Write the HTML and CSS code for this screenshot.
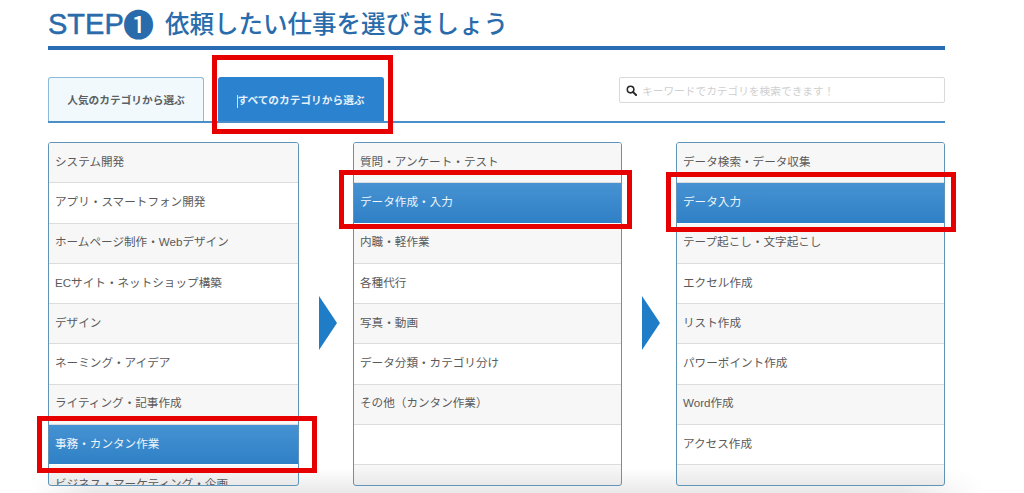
FILE: index.html
```html
<!DOCTYPE html>
<html lang="ja">
<head>
<meta charset="utf-8">
<title>STEP1</title>
<link rel="stylesheet" href="styles.css">
</head>
<body>
<main class="page">
  <h1 class="title"><span class="step">STEP</span><span class="num">❶</span><span class="title-text">依頼したい仕事を選びましょう</span></h1>
  <div class="tabbar">
    <a class="tab">人気のカテゴリから選ぶ</a>
    <a class="tab tab-active"><span class="caret"></span>すべてのカテゴリから選ぶ</a>
    <div class="search">
      <svg class="search-icon" viewBox="0 0 12 12" width="11" height="11"><circle cx="5" cy="5" r="3.6" fill="none" stroke="#2a2a2a" stroke-width="1.7"/><path d="M7.8 7.8L11 11" stroke="#2a2a2a" stroke-width="2.2" stroke-linecap="round"/></svg>
      <span class="placeholder">キーワードでカテゴリを検索できます！</span>
    </div>
  </div>
  <div class="columns">
    <ul class="list list-narrow">
      <li>システム開発</li>
      <li>アプリ・スマートフォン開発</li>
      <li>ホームページ制作・Webデザイン</li>
      <li>ECサイト・ネットショップ構築</li>
      <li>デザイン</li>
      <li>ネーミング・アイデア</li>
      <li>ライティング・記事作成</li>
      <li class="selected">事務・カンタン作業</li>
      <li class="clipped">ビジネス・マーケティング・企画</li>
    </ul>
    <div class="arrow"></div>
    <ul class="list">
      <li>質問・アンケート・テスト</li>
      <li class="selected">データ作成・入力</li>
      <li>内職・軽作業</li>
      <li>各種代行</li>
      <li>写真・動画</li>
      <li>データ分類・カテゴリ分け</li>
      <li>その他（カンタン作業）</li>
      <li class="empty"></li>
    </ul>
    <div class="arrow"></div>
    <ul class="list">
      <li>データ検索・データ収集</li>
      <li class="selected">データ入力</li>
      <li>テープ起こし・文字起こし</li>
      <li>エクセル作成</li>
      <li>リスト作成</li>
      <li>パワーポイント作成</li>
      <li>Word作成</li>
      <li>アクセス作成</li>
    </ul>
  </div>
  <div class="mark mark-tab"></div>
  <div class="mark mark-col1"></div>
  <div class="mark mark-col2"></div>
  <div class="mark mark-col3"></div>
  <div class="fade"></div>
</main>
</body>
</html>
```
FILE: styles.css
```css
* { box-sizing: border-box; }
html, body { margin: 0; padding: 0; background: #fff; }
body {
  font-family: "Liberation Sans", "Noto Sans CJK JP", sans-serif;
  color: #555;
  height: 493px;
  overflow: hidden;
}
.page {
  position: relative;
  width: 1024px;
  height: 493px;
  padding: 0 79px 0 48px;
  overflow: hidden;
}
.title {
  display: flex;
  align-items: center;
  margin: 0;
  height: 50px;
  padding-bottom: 1px;
  border-bottom: 4px solid #2a6cb3;
  font-family: "Noto Sans CJK JP", sans-serif;
  font-weight: 500;
  color: #2a6cab;
  white-space: nowrap;
}
.step {
  width: 75px;
  margin-top: 3px;
  font-family: "Liberation Sans", sans-serif;
  font-size: 29px;
  font-weight: 400;
  line-height: 32px;
  -webkit-text-stroke: 0.5px #2a6cab;
}
.num { width: 42px; font-size: 31px; line-height: 32px; }
.title-text { font-size: 24.5px; line-height: 32px; }
.tabbar {
  display: flex;
  align-items: flex-start;
  gap: 14px;
  margin-top: 27px;
  height: 46px;
  border-bottom: 2px solid #4a8fc7;
}
.tab {
  display: flex;
  align-items: center;
  justify-content: center;
  width: 156px;
  height: 44px;
  border: 1px solid #8dbad6;
  border-bottom: 0;
  border-radius: 3px 3px 0 0;
  background: #f2f9fd;
  font-size: 10.7px;
  font-weight: 700;
  color: #5a5f63;
}
.tab-active {
  position: relative;
  width: 166px;
  background: #2b82cf;
  border-color: #2b82cf;
  color: #e6f0f8;
}
.caret {
  position: absolute;
  left: 18px;
  top: 17px;
  width: 1px;
  height: 13px;
  background: #cfe2f2;
}
.search {
  display: flex;
  align-items: center;
  gap: 5px;
  margin-left: auto;
  width: 326px;
  height: 26px;
  padding-left: 6px;
  border: 1px solid #d9d9d9;
  border-radius: 2px;
  background: #fff;
}
.search-icon { flex: none; }
.placeholder { font-size: 10.7px; color: #cfcfcf; white-space: nowrap; }
.columns {
  position: relative;
  z-index: 1;
  display: flex;
  margin-top: 19px;
  height: 344px;
}
.list {
  flex: 0 0 269px;
  height: 344px;
  margin: 0;
  padding: 0;
  list-style: none;
  overflow: hidden;
  border: 1px solid #5f93b8;
  border-radius: 3px;
  background: linear-gradient(#f7f7f7 calc(100% - 18px), #e9e9e9);
}
.list-narrow { flex-basis: 251px; }
.list li {
  display: flex;
  align-items: center;
  height: 40.3px;
  padding: 0 0 4px 6px;
  border-bottom: 1px solid #dcdcdc;
  font-size: 11.6px;
  white-space: nowrap;
  color: #5a5a5a;
}
.list li:nth-child(odd) { background: #f7f7f7; }
.list li:nth-child(even) { background: #fff; }
.list li.selected {
  background: linear-gradient(#4692d2, #2f80c6);
  color: #eef5fb;
  border-bottom-color: #fff;
}
.list li.empty { background: #fff; }
.list li.clipped { background: transparent; }
.arrow {
  flex: 0 0 54px;
  display: flex;
  align-items: center;
  justify-content: center;
}
.arrow::before {
  content: "";
  margin: 18px 0 0 3px;
  border-left: 18px solid #1f7cc6;
  border-top: 27px solid transparent;
  border-bottom: 27px solid transparent;
}
.mark {
  position: absolute;
  z-index: 2;
  border: 5px solid #e60000;
  pointer-events: none;
}
.mark-tab { left: 212px; top: 55px; width: 181px; height: 79px; }
.mark-col1 { left: 37px; top: 416px; width: 280px; height: 57px; }
.mark-col2 { left: 339px; top: 170px; width: 293px; height: 59px; }
.mark-col3 { left: 666px; top: 172px; width: 290px; height: 60px; }
.fade {
  position: absolute;
  left: 0;
  right: 0;
  bottom: 0;
  height: 24px;
  background: linear-gradient(rgba(228,228,228,0), rgba(228,228,228,.85));
  -webkit-mask-image: linear-gradient(90deg, transparent 3%, #000 9%, #000 88%, transparent 96%);
  mask-image: linear-gradient(90deg, transparent 3%, #000 9%, #000 88%, transparent 96%);
  pointer-events: none;
}
```
